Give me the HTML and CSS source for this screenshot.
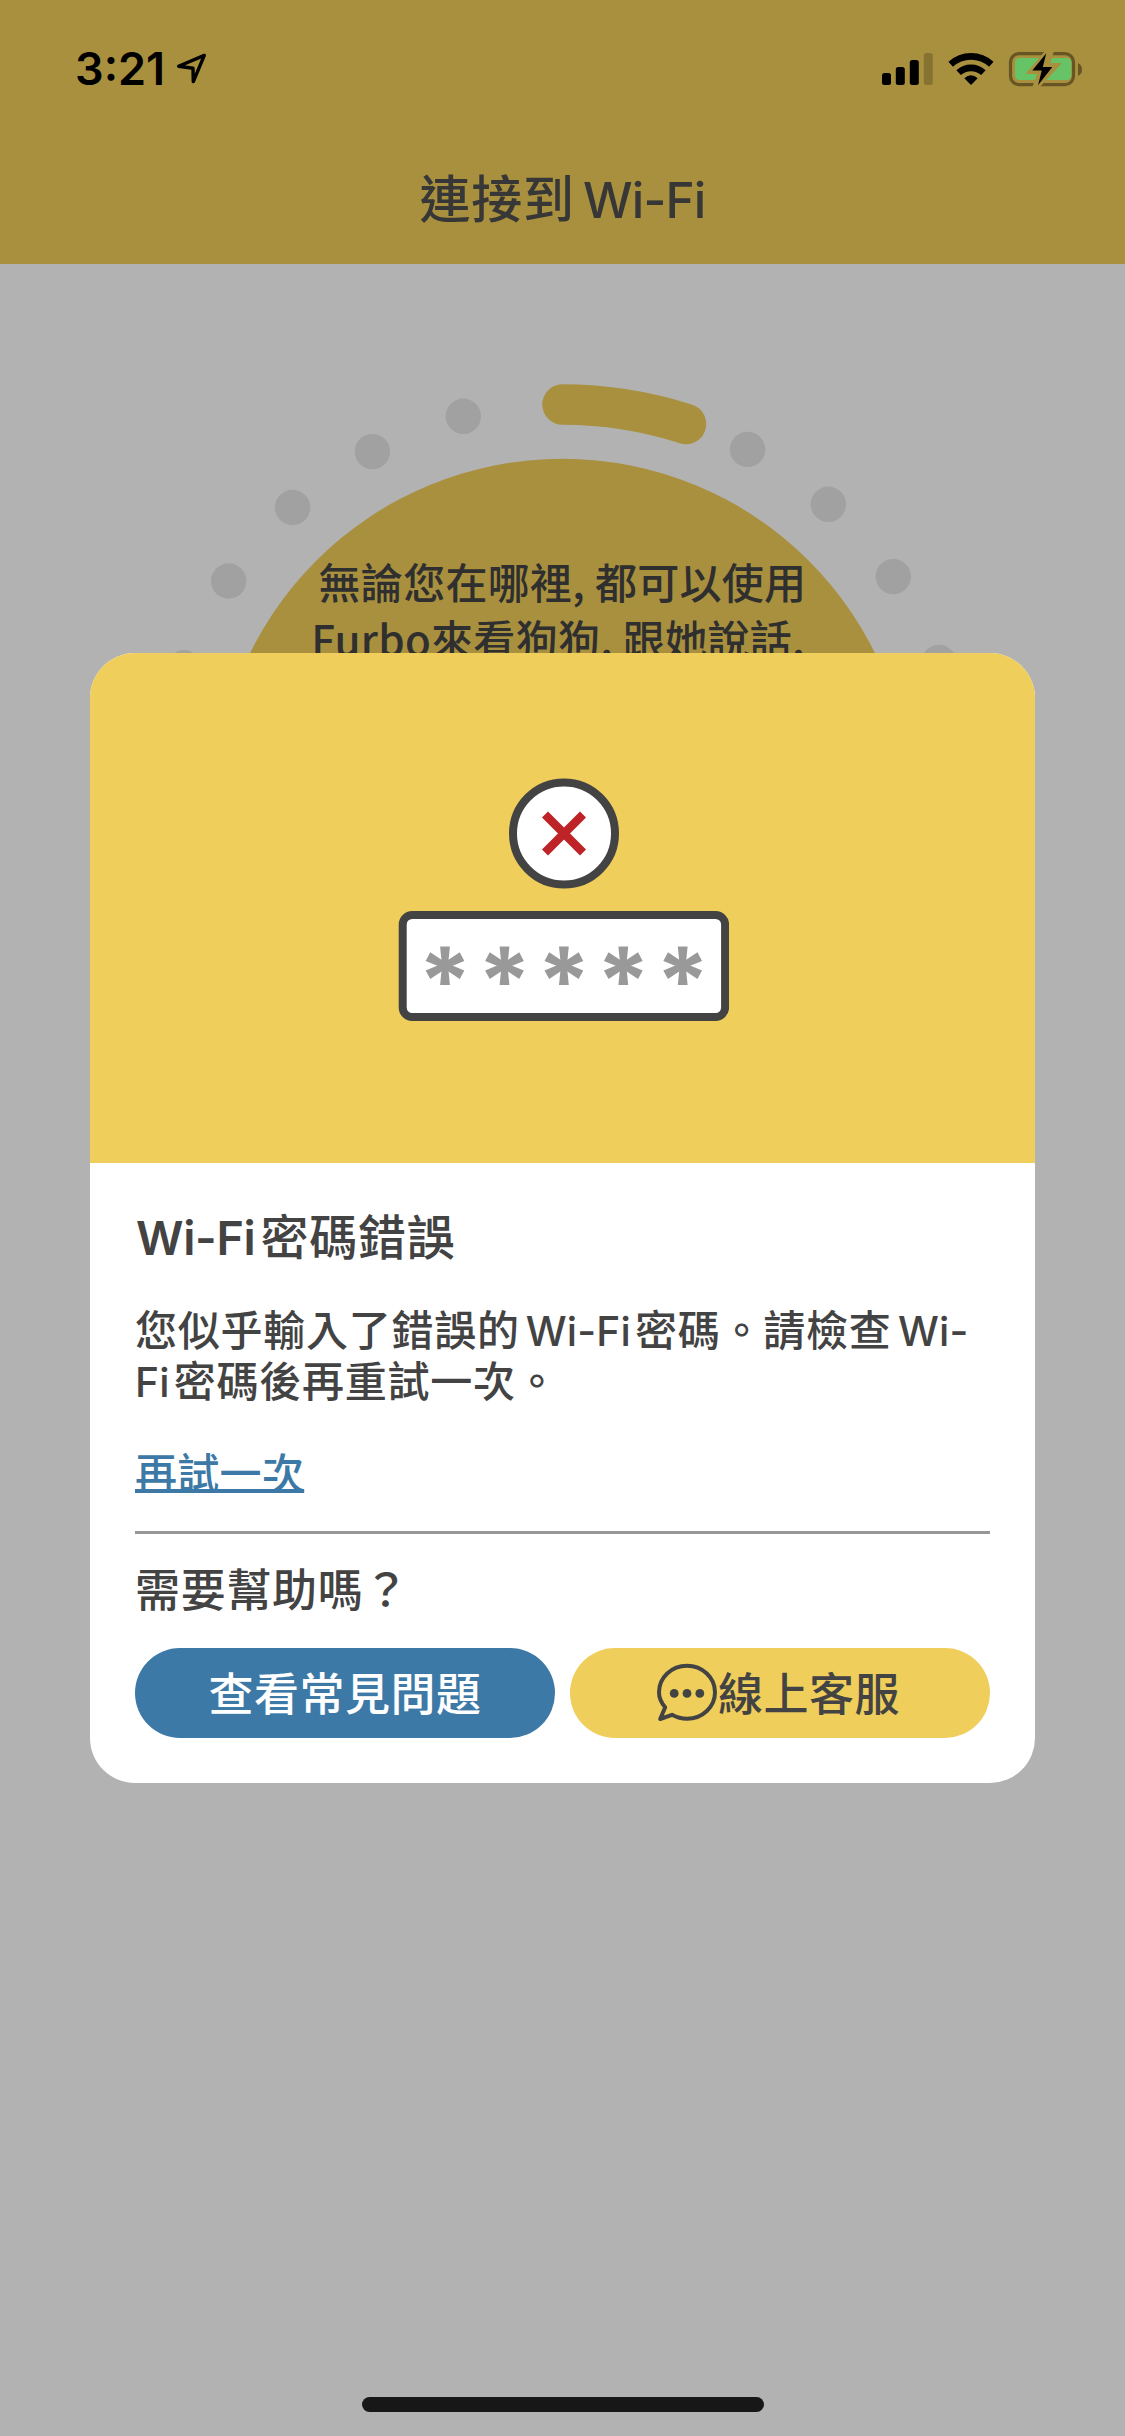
FILE: index.html
```html
<!DOCTYPE html>
<html lang="zh-Hant">
<head>
<meta charset="utf-8">
<title>連接到 Wi-Fi</title>
<link rel="stylesheet" href="styles.css">
</head>
<body>
<div class="screen">
  <header class="header">
    <div class="status">
      <span class="clock">3:21</span>
      <svg class="location" width="32" height="32" viewBox="0 0 32 32"><path d="M28.3 2.4L2.6 13.2L17 15.2L17.3 28.6Z" fill="none" stroke="#000" stroke-width="3.4" stroke-linejoin="round"/></svg>
      <svg class="indicators" width="204" height="36" viewBox="0 0 204 36">
        <rect x="0" y="22" width="9" height="12" rx="2.5"/>
        <rect x="13.8" y="16" width="9" height="18" rx="2.5"/>
        <rect x="27.8" y="9" width="9" height="25" rx="2.5"/>
        <rect x="41.8" y="2" width="9" height="32" rx="2.5" opacity=".2"/>
        <g fill="none" stroke="#000">
          <path d="M68.7 13.3A30 30 0 0 1 109.3 13.3" stroke-width="6.6"/>
          <path d="M76.6 21.6A18.5 18.5 0 0 1 101.4 21.6" stroke-width="6.6"/>
        </g>
        <path d="M82.3 27.2Q89 21.4 95.7 27.2L89 34Z"/>
        <rect x="128.5" y="2.6" width="63" height="31" rx="8.5" fill="none" stroke="#675624" stroke-width="3.2"/>
        <rect x="133" y="7" width="56.3" height="22" rx="4.5" fill="#67c466"/>
        <path d="M196 12Q200 14 200 18.5Q200 23 196 25Z" fill="#675624"/>
        <path d="M163 0L143.5 23H155L150 37H157L180 12H168.5L172 0Z" fill="#a9903e"/>
        <path d="M164.3 2.3L150.3 19.6H159.8L156 34.3L170.3 16H160.8Z"/>
      </svg>
    </div>
    <h1 class="title">連接到<span class="latin">Wi-Fi</span></h1>
  </header>

  <main class="stage">
    <svg class="ring" width="805" height="448" viewBox="160 384 805 448">
      <g fill="#a1a1a1">
        <circle cx="463.3" cy="416.3" r="17.7"/>
        <circle cx="372.4" cy="451.6" r="17.7"/>
        <circle cx="292.6" cy="507.5" r="17.7"/>
        <circle cx="228.7" cy="581" r="17.7"/>
        <circle cx="184" cy="667.8" r="17.7"/>
        <circle cx="747.6" cy="449.4" r="17.7"/>
        <circle cx="828.4" cy="504.3" r="17.7"/>
        <circle cx="893.3" cy="576.6" r="17.7"/>
        <circle cx="939" cy="662.5" r="17.7"/>
      </g>
      <circle cx="562.5" cy="807" r="348.3" fill="#a9903e"/>
      <path d="M562.5 404.5A402 402 0 0 1 686 424" fill="none" stroke="#a9903e" stroke-width="40.5" stroke-linecap="round"/>
    </svg>
    <p class="tip">無論您在哪裡, 都可以使用<br><span class="second">Furbo來看狗狗, 跟她說話,</span></p>
  </main>

  <section class="dialog">
    <div class="hero">
      <svg width="333" height="244" viewBox="396 778 333 244">
        <defs>
          <g id="star">
            <path id="bar" d="M-4.9 -19.3H4.9L3 0L4.9 19.3H-4.9L-3 0Z"/>
            <use href="#bar" transform="rotate(62)"/>
            <use href="#bar" transform="rotate(118)"/>
          </g>
        </defs>
        <circle cx="564" cy="833.5" r="51" fill="#fff" stroke="#434343" stroke-width="8"/>
        <path d="M545 814.5L583 852.5M583 814.5L545 852.5" stroke="#be2427" stroke-width="8.5"/>
        <rect x="402.7" y="915" width="322.4" height="102" rx="9.5" fill="#fff" stroke="#434343" stroke-width="8"/>
        <g fill="#999">
          <use href="#star" x="445" y="965.7"/>
          <use href="#star" x="504.5" y="965.7"/>
          <use href="#star" x="563.9" y="965.7"/>
          <use href="#star" x="623.3" y="965.7"/>
          <use href="#star" x="682.7" y="965.7"/>
        </g>
      </svg>
    </div>
    <div class="content">
      <h2 class="heading"><span class="latin">Wi-Fi</span>密碼錯誤</h2>
      <p class="message">您似乎輸入了錯誤的<span class="latin mid">Wi-Fi</span>密碼。請檢查<span class="latin tail">Wi-</span><br><span class="latin lead">Fi</span>密碼後再重試一次。</p>
      <a class="retry">再試一次</a>
      <hr class="rule">
      <p class="help">需要幫助嗎？</p>
      <div class="actions">
        <button class="button faq">查看常見問題</button>
        <button class="button chat">
          <svg width="62" height="62" viewBox="0 0 62 62">
            <path d="M9.2 45.3C5 40.5 3 35.5 3 30.3C3 15.7 15.5 3.8 31 3.8S59 15.7 59 30.3S46.5 56.8 31 56.8C25.5 56.8 20.5 55.3 16 52.8L4.2 57Z" fill="none" stroke="#434343" stroke-width="4" stroke-linejoin="round"/>
            <g fill="#434343"><circle cx="18.2" cy="31.4" r="4.4"/><circle cx="31" cy="31.4" r="4.4"/><circle cx="43.8" cy="31.4" r="4.4"/></g>
          </svg>
          <span>線上客服</span>
        </button>
      </div>
    </div>
  </section>
  <div class="home"></div>
</div>
</body>
</html>
```
FILE: styles.css
```css
* { box-sizing: border-box; margin: 0; padding: 0; }

body {
  font-family: "Noto Sans CJK TC", sans-serif;
  font-weight: 500;
  color: #434343;
  background: #b2b2b2;
}

.screen {
  position: relative;
  width: 1125px;
  height: 2436px;
  overflow: hidden;
}

.latin {
  font-family: Inter, sans-serif;
  font-size: .97em;
  line-height: 0;
  letter-spacing: .2px;
}

.header {
  height: 264px;
  background: #a9903e;
}

.status {
  display: flex;
  align-items: flex-start;
  height: 166px;
  padding: 51px 39px 0 75px;
}

.clock {
  width: 101px;
  font: 600 45px/36px Inter, sans-serif;
  color: #000;
}

.location { margin-top: 2px; }
.indicators { margin-left: auto; }

.title {
  font-size: 51px;
  font-weight: 500;
  line-height: 60px;
  letter-spacing: .8px;
  text-align: center;
  color: #373737;
}
.title .latin { margin-left: 8px; font-size: 49.5px; letter-spacing: -.8px; }

.stage {
  display: grid;
  justify-items: center;
  padding-top: 120px;
}
.ring, .tip { grid-area: 1 / 1; }

.tip {
  margin-top: 168px;
  font-size: 42px;
  font-weight: 500;
  line-height: 57px;
  letter-spacing: .3px;
  text-align: center;
  white-space: nowrap;
  color: #2f2f2f;
}
.second { margin-right: 9px; }

.dialog {
  position: absolute;
  top: 653px;
  left: 90px;
  width: 945px;
  height: 1130px;
  overflow: hidden;
  border-radius: 45px;
  background: #fff;
}

.hero {
  display: flex;
  justify-content: center;
  height: 510px;
  padding-top: 125px;
  background: #efce5b;
}

.content { padding: 41px 45px 45px; }

.heading {
  font-size: 48px;
  font-weight: 500;
  line-height: 60px;
  letter-spacing: .8px;
}
.heading .latin { margin: 0 5px 0 1px; font-weight: 600; letter-spacing: -.3px; }

.message {
  margin-top: 38px;
  font-size: 42px;
  line-height: 51px;
  letter-spacing: .75px;
  white-space: nowrap;
}
.mid { margin: 0 4px 0 6px; }
.tail { margin-left: 6.5px; }
.lead { margin-right: 4px; }

.retry {
  display: block;
  width: max-content;
  margin-top: 41px;
  font-size: 42px;
  line-height: 51px;
  letter-spacing: .3px;
  color: #3d79a6;
  text-decoration: underline;
  text-decoration-thickness: 4px;
  text-underline-offset: 0;
  text-decoration-skip-ink: none;
}

.rule {
  height: 3px;
  margin-top: 35px;
  border: 0;
  background: #979797;
}

.help {
  margin-top: 24px;
  font-size: 45px;
  line-height: 60px;
  letter-spacing: .7px;
}

.actions {
  display: grid;
  grid-template-columns: 1fr 1fr;
  gap: 15px;
  margin-top: 30px;
}

.button {
  display: flex;
  align-items: center;
  justify-content: center;
  height: 90px;
  padding-bottom: 2px;
  border: 0;
  border-radius: 45px;
  font: inherit;
  font-size: 45px;
  line-height: 60px;
  letter-spacing: .5px;
}
.faq { color: #fff; background: #3d79a6; }
.chat { padding-right: 4px; color: #434343; background: #efce5b; }
.chat svg { margin-top: 2px; }

.home {
  position: absolute;
  left: 362px;
  bottom: 24px;
  width: 402px;
  height: 15px;
  border-radius: 8px;
  background: #171717;
}
```
